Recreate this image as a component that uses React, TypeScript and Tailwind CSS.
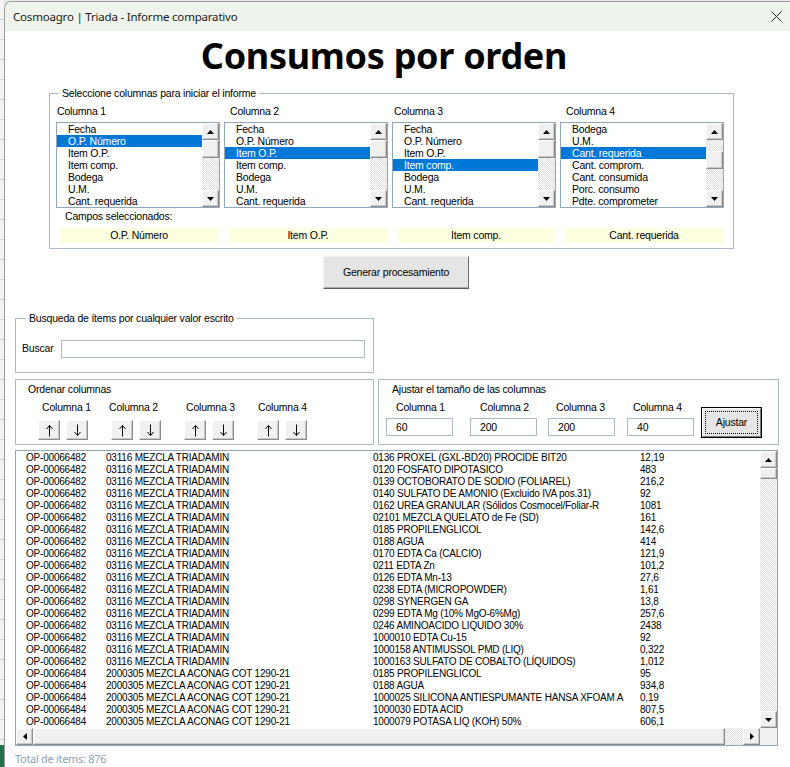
import React from "react";

const F = "font-['Liberation_Sans',Arial,sans-serif] text-[10.5px] tracking-[-0.2px]";
const HATCH = "bg-[repeating-conic-gradient(#dedede_0%_25%,#ffffff_0%_50%)] bg-[length:2px_2px]";
const RAISED = "bg-[#f0f0f0] border border-t-white border-l-white border-r-[#8c8c8c] border-b-[#8c8c8c] shadow-[inset_-1px_-1px_0_#c8c8c8]";

type Dir = "up" | "down" | "left" | "right";

function Tri({ dir }: { dir: Dir }) {
  const vert = dir === "up" || dir === "down";
  const pts = { up: "0,4 7,4 3.5,0", down: "0,0 7,0 3.5,4", left: "4,0 4,7 0,3.5", right: "0,0 0,7 4,3.5" }[dir];
  return (
    <svg width={vert ? 7 : 4} height={vert ? 4 : 7} viewBox={vert ? "0 0 7 4" : "0 0 4 7"}>
      <polygon points={pts} fill="#000" />
    </svg>
  );
}

function ScrollBtn({ dir }: { dir: Dir }) {
  return (
    <div className={`w-[17px] h-[17px] shrink-0 flex items-center justify-center ${RAISED}`}>
      <Tri dir={dir} />
    </div>
  );
}

function SmallList({ items, selected, gap }: { items: string[]; selected: number; gap: string }) {
  return (
    <div className="h-[86px] border border-[#8fa7bf] bg-white flex">
      <div className="flex-1 overflow-hidden">
        {items.map((it, i) => (
          <div
            key={i}
            className={`h-[12px] leading-[12px] pl-[11px] whitespace-nowrap ${i === selected ? "bg-[#0078d7] text-white" : "text-black"}`}
          >
            {it}
          </div>
        ))}
      </div>
      <div className="w-[17px] flex flex-col">
        <ScrollBtn dir="up" />
        <div className={`flex-1 flex flex-col ${HATCH}`}>
          <div className={gap} />
          <div className={`h-[18px] ${RAISED}`} />
        </div>
        <ScrollBtn dir="down" />
      </div>
    </div>
  );
}

function SortArrow({ up }: { up: boolean }) {
  return (
    <div className={`w-[22px] h-[20px] flex items-center justify-center ${RAISED}`}>
      <svg width="9" height="13" viewBox="0 0 9 13">
        {up ? (
          <path d="M4.5 1.5V12.5M4.5 1.5L1.5 5M4.5 1.5L7.5 5" stroke="#000" strokeWidth="1" fill="none" />
        ) : (
          <path d="M4.5 0.5V11.5M4.5 11.5L1.5 8M4.5 11.5L7.5 8" stroke="#000" strokeWidth="1" fill="none" />
        )}
      </svg>
    </div>
  );
}

const base = ["Fecha", "O.P. Número", "Item O.P.", "Item comp.", "Bodega", "U.M.", "Cant. requerida"];
const cols = [
  { label: "Columna 1", lp: "pl-[1px]", items: base, sel: 1, gap: "h-0", yl: "ml-[4px]", picked: "O.P. Número" },
  { label: "Columna 2", lp: "pl-[6px]", items: base, sel: 2, gap: "h-0", yl: "ml-[5px]", picked: "Item O.P." },
  { label: "Columna 3", lp: "pl-[2px]", items: base, sel: 3, gap: "h-0", yl: "ml-[5px]", picked: "Item comp." },
  {
    label: "Columna 4",
    lp: "pl-[6px]",
    items: ["Bodega", "U.M.", "Cant. requerida", "Cant. comprom.", "Cant. consumida", "Porc. consumo", "Pdte. comprometer"],
    sel: 2,
    gap: "h-[11px]",
    yl: "ml-[5px]",
    picked: "Cant. requerida",
  },
];

const A = ["OP-00066482", "03116 MEZCLA TRIADAMIN"];
const B = ["OP-00066484", "2000305 MEZCLA ACONAG COT 1290-21"];
const rows: [string[], string, string][] = [
  [A, "0136 PROXEL (GXL-BD20) PROCIDE BIT20", "12,19"],
  [A, "0120 FOSFATO DIPOTASICO", "483"],
  [A, "0139 OCTOBORATO DE SODIO (FOLIAREL)", "216,2"],
  [A, "0140 SULFATO DE AMONIO (Excluido IVA pos.31)", "92"],
  [A, "0162 UREA GRANULAR (Sólidos Cosmocel/Foliar-R", "1081"],
  [A, "02101 MEZCLA QUELATO de Fe (SD)", "161"],
  [A, "0185 PROPILENGLICOL", "142,6"],
  [A, "0188 AGUA", "414"],
  [A, "0170 EDTA Ca (CALCIO)", "121,9"],
  [A, "0211 EDTA Zn", "101,2"],
  [A, "0126 EDTA Mn-13", "27,6"],
  [A, "0238 EDTA (MICROPOWDER)", "1,61"],
  [A, "0298 SYNERGEN GA", "13,8"],
  [A, "0299 EDTA Mg (10% MgO-6%Mg)", "257,6"],
  [A, "0246 AMINOACIDO LIQUIDO 30%", "2438"],
  [A, "1000010 EDTA Cu-15", "92"],
  [A, "1000158 ANTIMUSSOL PMD (LIQ)", "0,322"],
  [A, "1000163 SULFATO DE COBALTO (LÍQUIDOS)", "1,012"],
  [B, "0185 PROPILENGLICOL", "95"],
  [B, "0188 AGUA", "934,8"],
  [B, "1000025 SILICONA ANTIESPUMANTE HANSA XFOAM A", "0,19"],
  [B, "1000030 EDTA ACID", "807,5"],
  [B, "1000079 POTASA LIQ (KOH) 50%", "606,1"],
];

const sizes = [
  { label: "Columna 1", val: "60", ml: "ml-[7px]", lp: "pl-[10px]" },
  { label: "Columna 2", val: "200", ml: "ml-[17px]", lp: "pl-[10px]" },
  { label: "Columna 3", val: "200", ml: "ml-[11px]", lp: "pl-[8px]" },
  { label: "Columna 4", val: "40", ml: "ml-[12px]", lp: "pl-[6px]" },
];

export default function App() {
  return (
    <div className="w-[790px] h-[767px] overflow-hidden flex bg-[#e9e9e9]">
      {/* excel behind the window */}
      <div className="w-[4px] flex flex-col bg-[#f3f3f3]">
        <div className="h-[745px] bg-[repeating-linear-gradient(#f3f3f3_0px,#f3f3f3_19px,#d4d4d4_19px,#d4d4d4_20px)]" />
        <div className="flex-1 bg-[#217346]" />
      </div>

      <div className="flex-1 mt-[1px] border-l border-t border-[#9a9a9a] rounded-tl-[7px] bg-white flex flex-col overflow-hidden">
        <div className="h-[29px] shrink-0 bg-[#eef3ec] flex items-center justify-between pl-[8px] pr-[8px] rounded-tl-[7px]">
          <span className="font-['Noto_Sans',sans-serif] text-[11.5px] tracking-[-0.2px] text-[#1a1a1a]">Cosmoagro | Triada - Informe comparativo</span>
          <svg width="11" height="11" viewBox="0 0 11 11">
            <path d="M0.5 0.5L10.5 10.5M10.5 0.5L0.5 10.5" stroke="#222" strokeWidth="1" />
          </svg>
        </div>

        <div className={`flex flex-col items-start ${F} text-black`}>
          <div className="w-[758px] h-[56px] flex items-center justify-center">
            <h1 className="font-['Noto_Sans',sans-serif] font-bold text-[36px] leading-none tracking-[-0.3px] text-black pb-[6px]">
              Consumos por orden
            </h1>
          </div>

          <fieldset className="ml-[44px] w-[685px] border border-[#a9bccf] pl-[6px] pt-[5px] pb-[5px]">
            <legend className="ml-[3px] px-[3px] leading-[13px] h-[13px]">Seleccione columnas para iniciar el informe</legend>
            <div className="grid grid-cols-[164px_164px_164px_164px] gap-x-[4px]">
              {cols.map((c) => (
                <div key={c.label} className={`h-[13px] leading-[13px] ${c.lp}`}>
                  {c.label}
                </div>
              ))}
              {cols.map((c) => (
                <div key={c.label + "l"} className="mt-[4px]">
                  <SmallList items={c.items} selected={c.sel} gap={c.gap} />
                </div>
              ))}
            </div>
            <div className="mt-[2px] h-[13px] leading-[13px] pl-[9px]">Campos seleccionados:</div>
            <div className="mt-[5px] grid grid-cols-[164px_164px_164px_164px] gap-x-[4px]">
              {cols.map((c) => (
                <div key={c.label + "y"} className={`w-[158px] h-[15px] leading-[15px] text-center bg-[#ffffe1] ${c.yl}`}>
                  {c.picked}
                </div>
              ))}
            </div>
          </fieldset>

          <button className="mt-[7px] ml-[318px] w-[146px] h-[33px] bg-[#e5e5e5] border border-t-[#f4f4f4] border-l-[#f4f4f4] border-r-[#6b6b6b] border-b-[#5a5a5a] shadow-[inset_0_-1px_0_#a8a8a8]">
            Generar procesamiento
          </button>

          <fieldset className="mt-[23px] ml-[10px] w-[359px] border border-[#a9bccf] pl-[6px] pt-[15px] pb-[14px]">
            <legend className="ml-[4px] px-[3px] leading-[13px] h-[13px]">Busqueda de ítems por cualquier valor escrito</legend>
            <div className="flex items-center">
              <span className="w-[39px]">Buscar</span>
              <div className="w-[304px] h-[18px] border border-[#a9bccf] bg-white" />
            </div>
          </fieldset>

          <div className="mt-[6px] flex">
            <div className="ml-[10px] w-[359px] h-[66px] border border-[#a9bccf] pl-[12px] pt-[3px]">
              <div className="h-[13px] leading-[13px]">Ordenar columnas</div>
              <div className="mt-[5px] flex h-[13px] leading-[13px] whitespace-nowrap">
                <span className="ml-[14px] w-[47px]">Columna 1</span>
                <span className="ml-[20px] w-[47px]">Columna 2</span>
                <span className="ml-[30px] w-[47px]">Columna 3</span>
                <span className="ml-[25px] w-[47px]">Columna 4</span>
              </div>
              <div className="mt-[6px] ml-[10px] flex gap-[23px]">
                {[0, 1, 2, 3].map((i) => (
                  <div key={i} className="flex gap-[6px]">
                    <SortArrow up />
                    <SortArrow up={false} />
                  </div>
                ))}
              </div>
            </div>

            <div className="ml-[4px] w-[401px] h-[66px] border border-[#a9bccf] pt-[3px]">
              <div className="h-[13px] leading-[13px] pl-[13px]">Ajustar el tamaño de las columnas</div>
              <div className="mt-[5px] flex items-start">
                {sizes.map((s) => (
                  <div key={s.label} className={`w-[67px] ${s.ml}`}>
                    <div className={`h-[13px] leading-[13px] whitespace-nowrap ${s.lp}`}>{s.label}</div>
                    <div className="mt-[4px] h-[18px] leading-[16px] border border-[#a9bccf] bg-white pl-[9px]">{s.val}</div>
                  </div>
                ))}
                <div className="ml-[7px] mt-[6px] w-[61px] h-[31px] border border-black">
                  <div className="w-full h-full bg-[#e5e5e5] border border-t-white border-l-white border-r-[#7a7a7a] border-b-[#7a7a7a] p-[2px]">
                    <div className="w-full h-full flex items-center justify-center border border-dotted border-black">Ajustar</div>
                  </div>
                </div>
              </div>
            </div>
          </div>

          <div className="mt-[5px] ml-[10px] w-[763px] h-[296px] border border-[#8fa7bf] bg-white flex flex-col">
            <div className="flex-1 flex overflow-hidden">
              <div className="flex-1 overflow-hidden pt-[1px] pl-[10px] text-[10px]">
                {rows.map(([ab, c, d], i) => (
                  <div key={i} className="h-[12px] leading-[12px] flex whitespace-nowrap">
                    <span className="w-[80px] shrink-0">{ab[0]}</span>
                    <span className="w-[267px] shrink-0">{ab[1]}</span>
                    <span className="w-[267px] shrink-0">{c}</span>
                    <span>{d}</span>
                  </div>
                ))}
              </div>
              <div className="w-[17px] flex flex-col">
                <ScrollBtn dir="up" />
                <div className={`flex-1 flex flex-col ${HATCH}`}>
                  <div className={`h-[11px] ${RAISED}`} />
                </div>
                <ScrollBtn dir="down" />
              </div>
            </div>
            <div className="h-[17px] flex">
              <ScrollBtn dir="left" />
              <div className={`flex-1 flex ${HATCH}`}>
                <div className={`w-[692px] h-full ${RAISED}`} />
              </div>
              <ScrollBtn dir="right" />
              <div className="w-[17px] h-[17px] bg-[#f0f0f0]" />
            </div>
          </div>

          <div className="mt-[5px] ml-[10px] font-['Noto_Sans',sans-serif] text-[11px] tracking-[-0.3px] leading-[16px] text-[#8aa3bb]">Total de ítems: 876</div>
        </div>
      </div>
    </div>
  );
}
